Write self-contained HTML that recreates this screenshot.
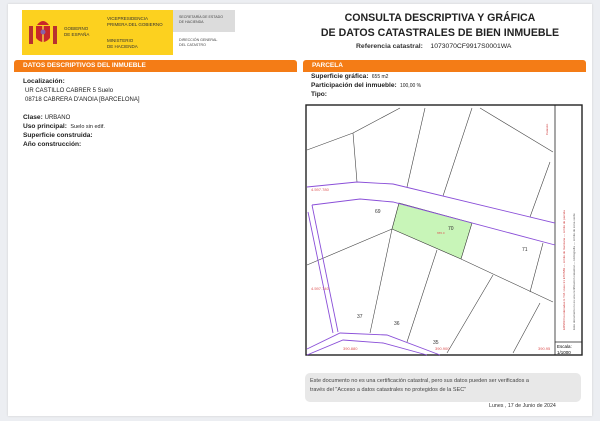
<!DOCTYPE html>
<html><head><meta charset="utf-8"><style>
*{margin:0;padding:0;box-sizing:border-box}
body{width:600px;height:421px;background:#eceef2;position:relative;overflow:hidden;font-family:"Liberation Sans",sans-serif;color:#222}
.card{position:absolute;left:8px;top:4px;width:584px;height:412px;background:#fff;box-shadow:0 0 2px #ccc}
.a{position:absolute;white-space:nowrap}
.bar{position:absolute;height:12px;background:#f47c16;border-radius:3px 3px 0 0;color:#fff;font-size:6.5px;font-weight:bold;padding:2px 0 0 9px}
.b{font-weight:bold;font-size:6.6px}
.s{font-size:6px}
</style></head><body>
<div class="card"></div>
<div class="a" style="left:22px;top:10px;width:151px;height:45px;background:#fcd11f"></div>
<div class="a" style="left:173px;top:10px;width:62px;height:22px;background:#dcdcdc"></div>
<svg class="a" style="left:27px;top:16px" width="32" height="32" viewBox="0 0 32 32">
<rect x="2" y="10" width="4" height="18" fill="#b8312f"/><rect x="26" y="10" width="4" height="18" fill="#b8312f"/>
<path d="M9 10h14v12q-7 8-14 0z" fill="#c8282a"/><path d="M16 10v16" stroke="#e8a33d" stroke-width="2"/>
<path d="M10 9q6-8 12 0z" fill="#c8282a"/><circle cx="16" cy="16" r="2.5" fill="#8a5fa8"/>
</svg>
<div class="a" style="left:64px;top:26px;font-size:4.5px;line-height:5.5px;color:#333">GOBIERNO<br>DE ESPAÑA</div>
<div class="a" style="left:107px;top:16px;font-size:4.5px;line-height:5.5px;color:#333">VICEPRESIDENCIA<br>PRIMERA DEL GOBIERNO</div>
<div class="a" style="left:107px;top:38px;font-size:4.5px;line-height:5.5px;color:#333">MINISTERIO<br>DE HACIENDA</div>
<div class="a" style="left:179px;top:15px;font-size:3.6px;line-height:4.5px;color:#444">SECRETARÍA DE ESTADO<br>DE HACIENDA</div>
<div class="a" style="left:179px;top:38px;font-size:3.6px;line-height:4.5px;color:#444">DIRECCIÓN GENERAL<br>DEL CATASTRO</div>
<div class="a" style="left:320px;top:11px;width:240px;text-align:center;font-weight:bold;font-size:10.6px;line-height:15px;color:#222">CONSULTA DESCRIPTIVA Y GRÁFICA<br>DE DATOS CATASTRALES DE BIEN INMUEBLE</div>
<div class="a" style="left:356px;top:43px;font-size:6.8px"><b style="color:#333">Referencia catastral:</b>&nbsp;&nbsp;&nbsp; 1073070CF9917S0001WA</div>
<div class="bar" style="left:14px;top:60px;width:283px">DATOS DESCRIPTIVOS DEL INMUEBLE</div>
<div class="bar" style="left:303px;top:60px;width:283px">PARCELA</div>
<div class="a b" style="left:23px;top:78px">Localización:</div>
<div class="a s" style="left:25px;top:88px">UR CASTILLO CABRER 5 Suelo</div>
<div class="a s" style="left:25px;top:97px">08718 CABRERA D'ANOIA [BARCELONA]</div>
<div class="a b" style="left:23px;top:114px">Clase: <span style="font-weight:normal;font-size:6px">URBANO</span></div>
<div class="a b" style="left:23px;top:123px">Uso principal: <span style="font-weight:normal;font-size:5.5px">&nbsp;Suelo sin edif.</span></div>
<div class="a b" style="left:23px;top:132px">Superficie construida:</div>
<div class="a b" style="left:23px;top:141px">Año construcción:</div>
<div class="a b" style="left:311px;top:73px">Superficie gráfica: <span style="font-weight:normal;font-size:5px">&nbsp;655 m2</span></div>
<div class="a b" style="left:311px;top:82px">Participación del inmueble: <span style="font-weight:normal;font-size:5px">&nbsp;100,00 %</span></div>
<div class="a b" style="left:311px;top:91px">Tipo:</div>
<svg class="a" style="left:0;top:0" width="600" height="421" viewBox="0 0 600 421">
<rect x="306" y="105" width="276" height="250" fill="#fff" stroke="#222" stroke-width="1.4"/>
<line x1="555" y1="105" x2="555" y2="355" stroke="#222" stroke-width="0.8"/>
<line x1="555" y1="342" x2="582" y2="342" stroke="#222" stroke-width="0.8"/>
<polygon points="399,203 472,223 461,259 392,229" fill="#c8f5b8" stroke="#333" stroke-width="0.6"/>
<g stroke="#444" stroke-width="0.6" fill="none">
<path d="M392 229L307 265M392 229L370 333M461 259L553 302M437 250L407 342M543 243L530 292M493 275L447 353M540 303L513 353M307 150L353 133L400 108M353 133L357 182M425 108L407 187M472 108L443 196M480 108L553 152M550 162L530 217"/>
</g>
<g stroke="#8a4fd8" stroke-width="0.9" fill="none">
<path d="M307 187L357 182L393 184L555 223"/><path d="M312 205L360 199L393 202L555 245"/>
<path d="M312 205L338 332"/><path d="M308 212L333 333"/>
<path d="M307 349L340 333L387 335L440 355"/><path d="M307 355L343 340L383 343L427 355"/>
</g>
<g font-family="Liberation Sans" font-size="5" fill="#333">
<text x="375" y="213">69</text><text x="448" y="230">70</text><text x="522" y="251">71</text>
<text x="357" y="318">37</text><text x="394" y="325">36</text><text x="433" y="344">35</text>
</g>
<g font-family="Liberation Sans" font-size="4" fill="#d55">
<text x="311" y="191">4.597.780</text><text x="311" y="290">4.597.740</text>
<text x="343" y="350">390.880</text><text x="435" y="350">390.900</text><text x="538" y="350">390.95</text>
<text x="437" y="234" font-size="3">655.0</text>
</g>
<text x="557" y="348" font-size="4.5" font-family="Liberation Sans">Escala:</text>
<text x="557" y="354" font-size="4.5" font-family="Liberation Sans">1/1000</text>
<text transform="translate(565,330) rotate(-90)" font-size="3" fill="#c33" font-family="Liberation Sans">ERS89 Coordenadas U.T.M. Huso 31 ETRS89 — Límite de manzana — Límite de parcela</text>
<text transform="translate(575,330) rotate(-90)" font-size="3" fill="#555" font-family="Liberation Sans">Este documento no es una certificación catastral — Hidrografía — Límite de zona verde</text>
<text transform="translate(548,135) rotate(-90)" font-size="3" fill="#c33" font-family="Liberation Sans">Catastro</text>
</svg>
<div class="a" style="left:305px;top:373px;width:276px;height:29px;background:#e8e8e8;border-radius:5px;font-size:5.5px;line-height:9px;padding:4px 0 0 5px;color:#444">Este documento no es una certificación catastral, pero sus datos pueden ser verificados a<br>través del "Acceso a datos catastrales no protegidos de la SEC"</div>
<div class="a" style="left:489px;top:403px;font-size:5.3px;color:#333">Lunes , 17 de Junio de 2024</div>
</body></html>
